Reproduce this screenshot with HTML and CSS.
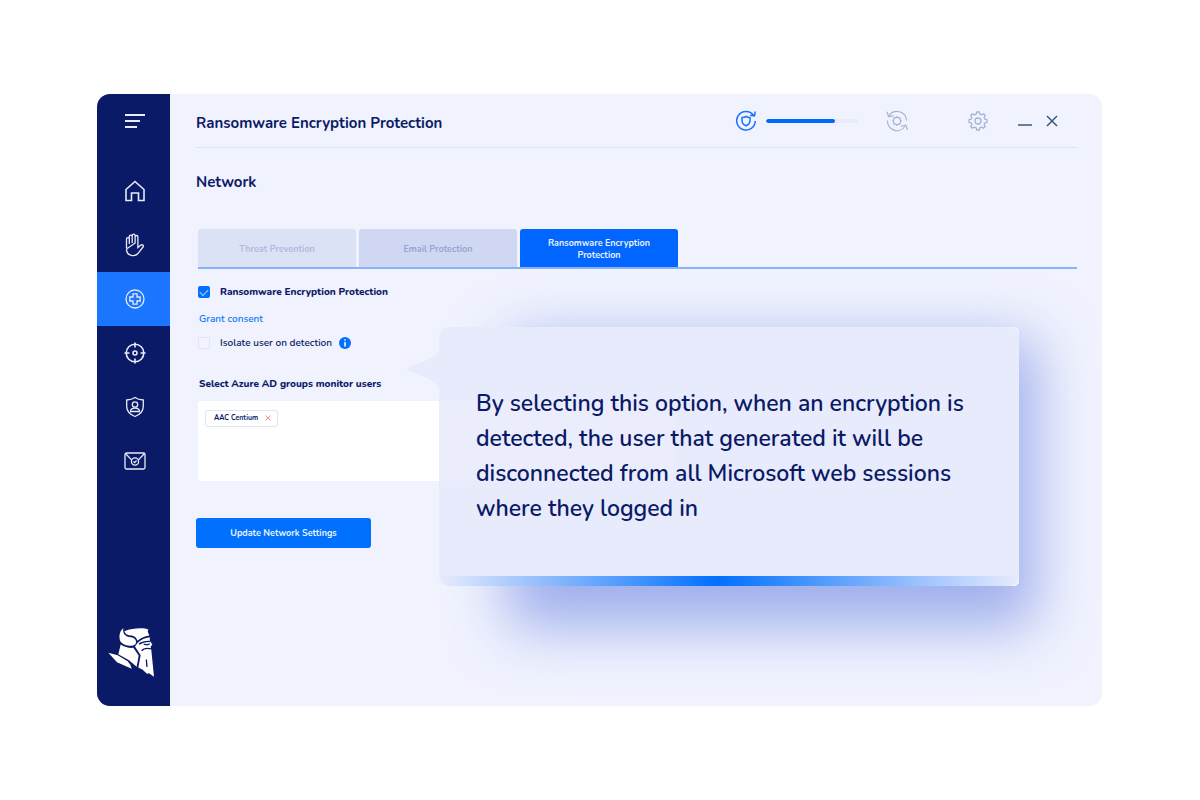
FILE: index.html
```html
<!DOCTYPE html>
<html lang="en">
<head>
<meta charset="utf-8">
<meta name="viewport" content="width=device-width, initial-scale=1">
<title>Ransomware Encryption Protection</title>
<link rel="stylesheet" href="styles.css">
</head>
<body>
<div class="window">
  <aside class="sidebar">
    <button class="nav-item menu" aria-label="Menu">
      <svg width="22" height="16" viewBox="0 0 22 16" stroke-width="2"><path d="M1 2h20M1 8h15M1 14h12"/></svg>
    </button>
    <nav class="nav">
      <a class="nav-item" href="#home" aria-label="Home">
        <svg width="20" height="22" viewBox="0 0 20 22"><path d="M1 20.500V9.500L10 1.500l9 8v11h-5.500V13h-7v7.500z"/></svg>
      </a>
      <a class="nav-item" href="#prevention" aria-label="Prevention">
        <svg class="thin" width="20" height="24" viewBox="0 0 20 24"><path d="M1.500 15V6.200c0-2 2.800-2 2.800 0V11M4.300 11V3.600c0-2 2.900-2 2.900 0V10M7.200 10V2.700c0-2 2.900-2 2.900 0V10M10.100 10V4c0-2 2.800-2 2.800 0v10.500l2.600-2.300c1.800-1.200 3.600.3 2.500 1.800l-4.700 6.200c-2.800 3.600-11.800 3.600-11.800-4.200z"/></svg>
      </a>
      <a class="nav-item active" href="#protection" aria-label="Protection" aria-current="page">
        <svg class="thin" width="20" height="20" viewBox="0 0 20 20"><circle cx="10" cy="10" r="9"/><path d="M8 4.800h4v3.200h3.200v4H12v3.200H8V12H4.800V8H8z"/></svg>
      </a>
      <a class="nav-item" href="#detection" aria-label="Detection">
        <svg width="22" height="22" viewBox="0 0 22 22"><circle cx="11" cy="11" r="8.800"/><circle cx="11" cy="11" r="2"/><path d="M11 .500v5M11 16.500v5M.500 11h5M16.500 11h5"/></svg>
      </a>
      <a class="nav-item" href="#identity" aria-label="Identity">
        <svg class="thin" width="20" height="22" viewBox="0 0 20 22"><path d="M10 1.500c2.500 1.700 5 2.300 8.300 2.500v6.200c0 5-3.300 8.300-8.300 10.300-5-2-8.300-5.300-8.300-10.300V4C5 3.800 7.500 3.200 10 1.500z"/><circle cx="10" cy="8.500" r="2.700"/><path d="M5.500 15.500c0-4.500 9-4.500 9 0z"/></svg>
      </a>
      <a class="nav-item" href="#email" aria-label="Email">
        <svg class="thin" width="22" height="18" viewBox="0 0 22 18"><rect x="1" y="1" width="20" height="16" rx="1.500"/><path d="M1.500 1.500l6.300 6.600M20.500 1.500l-6.300 6.600"/><circle cx="11" cy="9.500" r="3.600"/><path d="M9.400 9.600l1.200 1.100 2-2.200"/></svg>
      </a>
    </nav>
    <svg class="logo" viewBox="11 15 138 152" role="img" aria-label="Company logo">
      <path d="M60 27C76 20 92 18 108 18 118 18 127 19 132 22L130 28 135 40C120 42 108 48 99 56 97 45 88 40 78 40 68 39 62 34 60 27z"/>
      <path d="M57 18C42 28 43 54 52 62 62 72 84 73 93 66 99 58 92 45 79 45 64 45 54 34 57 18z"/>
      <path d="M100 62C110 52 122 47 136 45L137 56 144 68 139 73 141 84 149 164 134 153 128 155 114 142 102 136 109 99 92 73z"/>
      <path d="M49 67C60 75 74 78 87 77L103 100 97 134 74 114 42 96z"/>
      <path d="M12 92L40 99 70 117 78 128 82 140 60 130 38 120z"/>
      <path class="logo-line" d="M104 66C114 59 124 57 138 58M118 66l10 2 8-3M112 86c6-8 16-9 28-6M126 112l2 22"/>
    </svg>
  </aside>

  <main class="main">
    <header class="topbar">
      <h1 class="title">Ransomware Encryption Protection</h1>
      <div class="tools">
        <svg class="icon-sync" width="22" height="22" viewBox="0 0 22 22"><path d="M18.500 5.200A9.300 9.300 0 1 0 20.300 11M20.200 1.500l-.7 4.300-4.300-.6"/><path d="M11 6.500c1.300.8 2.500 1 4 1.100v3.200c0 2.500-1.600 4-4 5-2.400-1-4-2.500-4-5V7.600c1.500-.1 2.700-.3 4-1.100z"/></svg>
        <progress class="progress" value="75" max="100" aria-label="Scan progress"></progress>
        <button class="tool refresh" aria-label="Refresh settings">
          <svg width="22" height="22" viewBox="0 0 22 22" stroke-width="1.200"><path d="M3.200 5.500A9.500 9.500 0 0 1 20.500 10.500M1 1.800l1.600 4.700 5-.7M18.800 16.500A9.500 9.500 0 0 1 1.500 10.500M21.500 20l-1.800-5-4.700 1.500"/><circle cx="11" cy="11" r="3.600"/><path d="M11 6v1.400M11 14.600V16M6 11h1.400M14.600 11H16M7.500 7.500l.9.900M13.600 13.600l.9.900M14.500 7.500l-.9.900M8.400 13.600l-.9.900"/></svg>
        </button>
        <button class="tool" aria-label="Settings">
          <svg width="20" height="20" viewBox="0 0 20 20" stroke-width="1.300"><path d="M8.200 3.100 8.700 1h2.600l.5 2.100 1.800.8 1.900-1.200 1.800 1.800-1.200 1.900.8 1.800 2.100.5v2.600l-2.100.5-.8 1.800 1.200 1.900-1.800 1.800-1.900-1.200-1.800.8-.5 2.100H8.700l-.5-2.100-1.800-.8-1.900 1.200-1.800-1.800 1.200-1.900-.8-1.800L1 11.300V8.700l2.100-.5.800-1.800-1.200-1.900 1.800-1.800 1.900 1.200z" stroke-linejoin="round"/><circle cx="10" cy="10" r="3"/></svg>
        </button>
        <div class="window-controls">
          <button class="tool dark" aria-label="Minimize"><svg width="14" height="12" viewBox="0 0 14 12"><path d="M0 10h14"/></svg></button>
          <button class="tool dark" aria-label="Close"><svg width="12" height="12" viewBox="0 0 12 12"><path d="M1 1l10 10M11 1L1 11"/></svg></button>
        </div>
      </div>
    </header>

    <h2 class="section-title">Network</h2>

    <div class="tabs" role="tablist">
      <button class="tab muted" role="tab" aria-selected="false">Threat Prevention</button>
      <button class="tab" role="tab" aria-selected="false">Email Protection</button>
      <button class="tab selected" role="tab" aria-selected="true">Ransomware Encryption Protection</button>
    </div>

    <form class="settings">
      <div class="check-row strong">
        <input class="check" type="checkbox" id="ransomware" checked>
        <label for="ransomware">Ransomware Encryption Protection</label>
      </div>
      <a class="consent" href="#consent">Grant consent</a>
      <div class="check-row">
        <input class="check" type="checkbox" id="isolate" aria-describedby="isolate-tip">
        <label for="isolate">Isolate user on detection</label>
        <button class="info" type="button" aria-label="More information">
          <svg width="12" height="12" viewBox="0 0 12 12"><circle cx="6" cy="6" r="6" fill="#0070ff" stroke="none"/><path d="M6 5v4.500M6 2.200v1.600" stroke="#fff" stroke-width="1.500"/></svg>
        </button>
      </div>
      <h3 class="field-title">Select Azure AD groups monitor users</h3>
      <div class="groups">
        <span class="chip">AAC Centium
          <button class="chip-remove" type="button" aria-label="Remove AAC Centium"><svg width="6" height="6" viewBox="0 0 6 6"><path d="M.500.500l5 5M5.500.500l-5 5"/></svg></button>
        </span>
      </div>
      <button class="submit" type="submit">Update Network Settings</button>
    </form>

    <div class="callout" id="isolate-tip" role="tooltip">
      <div class="callout-shadow"></div>
      <svg class="callout-arrow" width="33" height="36" viewBox="0 0 33 36"><path d="M33 0C25 8 20 10 2 16.500Q0 18 2 19.500C20 26 25 28 33 36z"/></svg>
      <div class="callout-card">
        <p class="callout-text">By selecting this option, when an encryption is detected, the user that generated it will be disconnected from all Microsoft web sessions where they logged in</p>
      </div>
    </div>
  </main>
</div>
</body>
</html>
```
FILE: styles.css
```css
* { box-sizing: border-box; }

body {
  margin: 0;
  padding: 94px 98px 94px 97px;
  background: #fff;
  color: #0b1a66;
  font-family: Nunito, Lato, "Open Sans", sans-serif;
  font-size: 10px;
  font-weight: 600;
  line-height: 16px;
}

h1, h2, h3, p { margin: 0; }

button {
  border: 0;
  padding: 0;
  background: none;
  font: inherit;
  color: inherit;
  cursor: pointer;
}

svg { display: block; fill: none; stroke: currentColor; }

.window {
  display: flex;
  min-height: calc(100vh - 188px);
  border-radius: 13px;
  overflow: hidden;
  background: #f0f2fe;
}

.sidebar {
  flex: 0 0 73px;
  display: flex;
  flex-direction: column;
  background: #0b1a66;
  color: #fff;
  padding-bottom: 28px;
}

.nav { margin-top: 16px; }

.nav-item {
  display: flex;
  width: 100%;
  height: 54px;
  align-items: center;
  justify-content: center;
  padding-left: 2px;
  color: #e8ebfa;
  stroke-width: 1.6px;
}

.nav-item .thin { stroke-width: 1.3px; }
.nav-item.active { background: #1a75ff; }

.logo {
  width: 46px;
  height: 51px;
  margin: auto auto 0 11px;
  fill: #fff;
  stroke: none;
}

.logo-line { fill: none; stroke: #0b1a66; stroke-width: 4px; }

.main {
  position: relative;
  flex: 1;
  min-width: 0;
  padding: 0 25px 0 26px;
}

.topbar {
  display: flex;
  align-items: center;
  justify-content: space-between;
  height: 54px;
  border-bottom: 1px solid #d9e2f7;
}

.title, .section-title {
  font-size: 15px;
  line-height: 20px;
  font-weight: 700;
}

.title { padding-top: 4px; }
.section-title { margin-top: 24px; }

.tools {
  display: flex;
  align-items: center;
  padding-right: 19px;
}

.icon-sync { color: #1a70ff; stroke-width: 1.5px; }

.progress {
  appearance: none;
  width: 92px;
  height: 4px;
  margin: 0 28px 0 9px;
  border: 0;
  border-radius: 2px;
  background: #e8ebf8;
  overflow: hidden;
}

.progress::-webkit-progress-bar { background: #e8ebf8; }
.progress::-webkit-progress-value { background: #0066ff; border-radius: 2px; }

.tool { color: #a5b4d3; }
.refresh { margin-right: 60px; }
.window-controls { display: flex; gap: 14px; margin-left: 30px; }
.dark { color: #3d5a78; stroke-width: 1.5px; }

.tabs {
  display: flex;
  gap: 3px;
  margin: 37px 0 0 2px;
  border-bottom: 2px solid #86b4f9;
}

.tab {
  flex: 0 1 158px;
  height: 38px;
  padding: 1px 24px 0;
  border-radius: 3px 3px 0 0;
  background: #d0d7f2;
  color: #98a5cf;
  font-size: 9px;
  line-height: 12px;
  font-weight: 700;
}

.tab.muted { background: #dce2f5; color: #b0bbdc; }
.tab.selected { background: #0066ff; color: #e8f0ff; margin-bottom: -1px; }

.settings {
  display: flex;
  flex-direction: column;
  align-items: flex-start;
  padding: 15px 0 24px 2px;
}

.check-row { display: flex; align-items: center; gap: 10px; }
.strong { font-weight: 800; }

.check {
  appearance: none;
  width: 12px;
  height: 12px;
  margin: 0;
  border: 1px solid #dde2f6;
  border-radius: 2px;
  background: #f3f4fe;
}

.check:checked {
  border-color: #0070ff;
  background: #0070ff;
}

.check:checked::before {
  content: "";
  display: block;
  width: 7px;
  height: 4px;
  margin: 2px 1px;
  border: solid #b9d7ff;
  border-width: 0 0 1px 1px;
  transform: rotate(-45deg);
}

.consent {
  margin: 11px 0 8px 1px;
  color: #0f78ff;
  text-decoration: none;
}

.info { margin-left: -3px; }

.field-title {
  margin: 25px 0 9px 1px;
  font-size: 10px;
  line-height: 16px;
  font-weight: 800;
}

.groups {
  width: 478px;
  max-width: 100%;
  min-height: 80px;
  padding: 8px 7px;
  border-radius: 2px;
  background: #fff;
}

.chip {
  display: inline-flex;
  align-items: center;
  gap: 7px;
  height: 17px;
  padding: 0 6px 0 8px;
  border: 1px solid #dfe4f8;
  border-radius: 3px;
  font-size: 7px;
  line-height: 12px;
  font-weight: 700;
}

.chip-remove { color: #ff8f80; stroke-width: 1px; }

.submit {
  width: 175px;
  height: 30px;
  margin: 37px 0 0 -2px;
  border-radius: 3px;
  background: #0070ff;
  color: #e8f2ff;
  font-size: 9px;
  font-weight: 700;
}

/* Explains the isolate option; floats over the form. */
.callout {
  position: absolute;
  top: 233px;
  left: 269px;
  right: 83px;
}

.callout-card {
  position: relative;
  min-height: 259px;
  padding: 59px 37px;
  border-radius: 10px;
  overflow: hidden;
  background: rgba(230, 233, 251, 0.8);
}

.callout-card::after {
  content: "";
  position: absolute;
  inset: auto 0 0;
  height: 10px;
  background: linear-gradient(90deg, rgba(0, 112, 255, 0), #0070ff 48%, rgba(0, 112, 255, 0));
}

.callout-text {
  font-size: 23px;
  line-height: 35px;
  font-weight: 600;
}

.callout-shadow {
  position: absolute;
  inset: 0;
  clip-path: polygon(evenodd, -150px -150px, calc(100% + 150px) -150px, calc(100% + 150px) calc(100% + 150px), -150px calc(100% + 150px), -150px -150px, 0 3px, 0 calc(100% - 3px), 3px 100%, calc(100% - 3px) 100%, 100% calc(100% - 3px), 100% 3px, calc(100% - 3px) 0, 3px 0, 0 3px);
}

.callout-shadow::before {
  content: "";
  position: absolute;
  inset: 13px -17px -41px 68px;
  border-radius: 16px;
  background: #9fafec;
  filter: blur(28px);
}

.callout-arrow {
  position: absolute;
  top: 24px;
  right: 100%;
  fill: rgba(230, 233, 251, 0.8);
  stroke: none;
}
```
